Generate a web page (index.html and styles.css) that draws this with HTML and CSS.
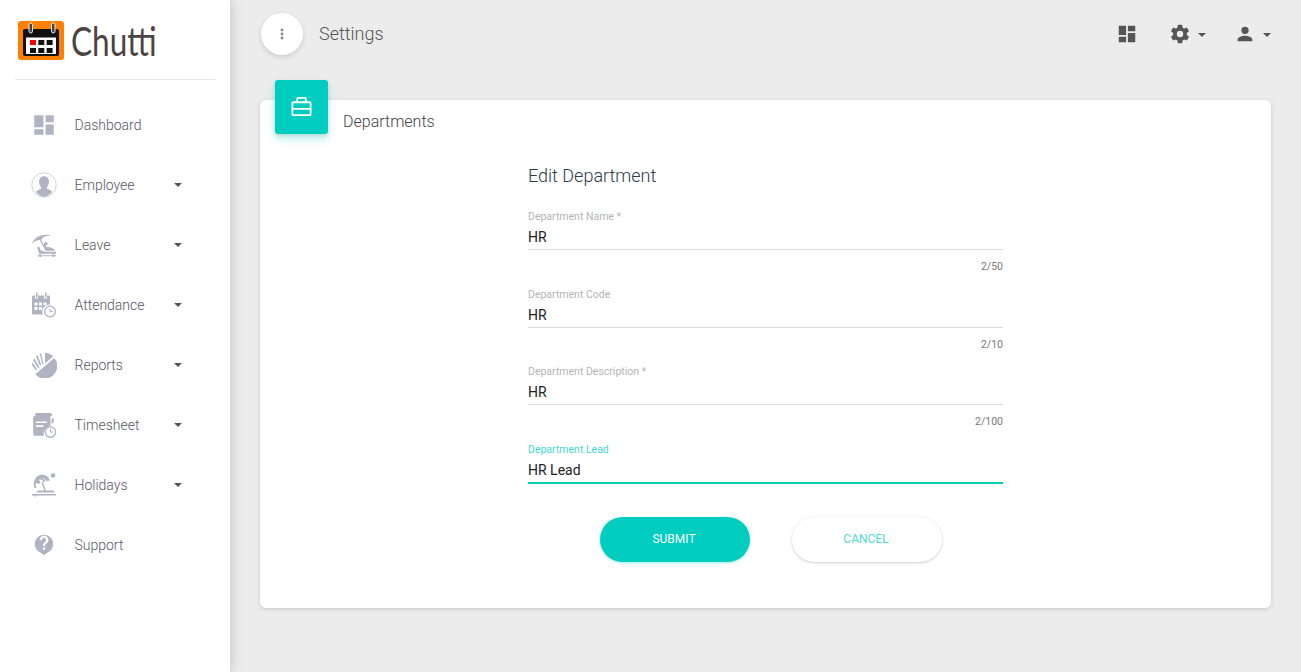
FILE: index.html
```html
<!DOCTYPE html>
<html lang="en">
<head>
  <meta charset="UTF-8"/>
  <title>Chutti - Settings</title>
  <link rel="stylesheet" href="styles.css">
</head>
<body>
  <!-- Sidebar -->
  <aside class="sidebar">
    <div class="brand">
      <svg class="brand-icon" width="47" height="41" viewBox="0 0 47 41">
        <rect width="46" height="39" y="1" rx="3" fill="#ff7f00"/>
        <path d="M7 9h32a2 2 0 0 1 2 2v23a2 2 0 0 1-2 2H7a2 2 0 0 1-2-2V11a2 2 0 0 1 2-2z" fill="#111"/>
        <rect x="8" y="17.500" width="30" height="16.500" fill="#fff"/>
        <rect x="12" y="20" width="6" height="5" fill="#f00"/>
        <rect x="20.300" y="20" width="6" height="5" fill="#111"/>
        <rect x="28.600" y="20" width="6" height="5" fill="#111"/>
        <rect x="12" y="28" width="6" height="5" fill="#111"/>
        <rect x="20.300" y="28" width="6" height="5" fill="#111"/>
        <rect x="28.600" y="28" width="6" height="5" fill="#111"/>
        <rect x="11" y="3" width="3.500" height="10" rx="1.750" fill="#444" stroke="#eee" stroke-width="1"/>
        <rect x="33.500" y="3" width="3.500" height="10" rx="1.750" fill="#444" stroke="#eee" stroke-width="1"/>
      </svg>
      <span class="brand-name">Chutt<span class="brand-i">i</span></span>
    </div>

    <nav class="nav">
      <a class="nav-item">
        <svg class="nav-icon" viewBox="0 0 24 24"><path d="M3 3h8.500v11H3zM13.500 3H21v6.500h-7.500zM13.500 11.500H21V21h-7.500zM3 16h8.500v5H3z"/></svg>
        <span class="nav-label">Dashboard</span>
      </a>
      <a class="nav-item">
        <svg class="nav-icon" viewBox="0 0 24 24"><circle cx="12" cy="12" r="11.300" fill="none" stroke="#c4c6d2" stroke-width=".7"/><path d="M12 4c3 0 4.600 2.300 4.600 5 0 2-.8 3.600-1.800 4.800-.3 1 0 1.700 1 2.200 1.700.7 3 1.300 3.700 2.400A11 11 0 0 1 12 22.800a11 11 0 0 1-7.500-4.400c.7-1.100 2-1.700 3.700-2.400 1-.5 1.300-1.200 1-2.200C8.200 12.600 7.400 11 7.400 9c0-2.700 1.600-5 4.600-5z"/></svg>
        <span class="nav-label">Employee</span>
        <span class="caret"></span>
      </a>
      <a class="nav-item">
        <svg class="nav-icon" viewBox="0 0 28 26"><path d="M1 12C3 5 10 1 18 2c1 0 2 .5 3 1-5-.5-8 1.500-10 4l3 7h-1.300L9.600 7.500C6 7.500 3 9 1 12z"/><path d="M9 15l1.500 4 5 1.200H27V22.500H9L6.500 15.500zM14 11.500a2 2 0 1 1 2.300 2.300l-.6 1.200 5 .5 4 1.800 1.500 2H15.500L13 14z"/><path d="M7 24h20v1H7zM9 23h2v3H9zM23 23h2v3h-2z"/></svg>
        <span class="nav-label">Leave</span>
        <span class="caret"></span>
      </a>
      <a class="nav-item">
        <svg class="nav-icon" viewBox="0 0 26 25"><path d="M2.500 3H4v3h3V3h6v3h3V3h1.500A1.500 1.500 0 0 1 19 4.500V12a7 7 0 0 0-7 10H2.500A1.500 1.500 0 0 1 1 20.500v-16A1.500 1.500 0 0 1 2.500 3zM5 0h1.500v5H5zM14 0h1.500v5H14z"/><path d="M3.500 10h3v3h-3zM8 10h3v3H8zM12.500 10h3v2.500h-3zM3.500 14.500h3v3h-3zM8 14.500h3v3H8z" fill="#fff"/><circle cx="19" cy="19" r="5.300" fill="#fff" stroke="#b0b3c2" stroke-width="1.300"/><path d="M19 16v3h3" fill="none" stroke="#b0b3c2" stroke-width="1"/></svg>
        <span class="nav-label">Attendance</span>
        <span class="caret"></span>
      </a>
      <a class="nav-item">
        <svg class="nav-icon" viewBox="0 0 24 24">
          <path d="M4 20.500L21.500 5.500A11.500 11.500 0 0 1 4 20.500z"/>
          <path d="M13 .6A11.500 11.500 0 0 1 20.500 4L13 10.500z"/>
          <path d="M8 1.700l1.200-.6 2.300 9.700-1 .8zM4.500 4l1.400-1.300 3.500 9-1.200 1zM2 7.500L3 5.800l4.800 8.300-1.200 1zM.7 12l.5-2.500 4.400 6.400-1 1z"/>
        </svg>
        <span class="nav-label">Reports</span>
        <span class="caret"></span>
      </a>
      <a class="nav-item">
        <svg class="nav-icon" viewBox="0 0 24 24"><path d="M4 1h13.500a2 2 0 0 1 2 2v1H4zM2 5.500a2 2 0 0 1 2-2h12a2 2 0 0 1 2 2V13a7 7 0 0 0-6 9H4a2 2 0 0 1-2-2z"/><path d="M19 6h2v3.500l-2 1.500z"/><path d="M4.500 9.500h10M4.500 13h7" stroke="#fff" stroke-width="1.500"/><circle cx="18" cy="18.500" r="4.800" fill="#fff" stroke="#b0b3c2" stroke-width="1.200"/><path d="M18 16v2.500h2.500" fill="none" stroke="#b0b3c2"/></svg>
        <span class="nav-label">Timesheet</span>
        <span class="caret"></span>
      </a>
      <a class="nav-item">
        <svg class="nav-icon" viewBox="0 0 26 24"><circle cx="22" cy="2.500" r="2.300"/><path d="M3.500 15C1.500 9 4 3.500 9 2c4-1.200 8.500 1 10 5.500l-3.500.6C14 5.500 11.500 5 11 5c2 1 3 2 3.500 3.500l-2.300.8-.9-2.300C10 6 8 6.500 7.500 7c1 .5 1.700 1.500 2 2.500L7.500 11c-1-.5-2-1-2.700-1-.2 1 0 4 .7 5z"/><path d="M12 9l3 9h-1.500L10.500 9.500zM7 17.500h15l2 2H5zM1 21h24v1.500H1zM3.500 22H5v1.500H3.500z"/></svg>
        <span class="nav-label">Holidays</span>
        <span class="caret"></span>
      </a>
      <a class="nav-item">
        <svg class="nav-icon" viewBox="-2 -1 28 28"><path d="M12 2a10 10 0 0 0-3 19.500L12 24l3-2.500A10 10 0 0 0 12 2zm1.200 16h-2.400v-2.400h2.400zm2.500-7.700l-1.100 1.100c-.9.900-1.400 1.600-1.400 2.800h-2.400v-.6c0-1.100.5-2 1.400-2.900l1.500-1.500c.4-.4.600-.9.600-1.400a2.400 2.400 0 0 0-4.800 0H7.200a4.800 4.800 0 0 1 9.600 0c0 1-.4 1.900-1.100 2.500z" fill-rule="evenodd"/></svg>
        <span class="nav-label">Support</span>
      </a>
    </nav>
  </aside>

  <!-- Main panel -->
  <main class="main">
    <header class="topbar">
      <button class="menu-btn">
        <svg width="4" height="12" viewBox="0 0 4 12"><circle cx="2" cy="2" r="1.400"/><circle cx="2" cy="6" r="1.400"/><circle cx="2" cy="10" r="1.400"/></svg>
      </button>
      <span class="page-title">Settings</span>
      <div class="top-actions">
        <svg class="top-icon" viewBox="0 0 24 24"><path d="M3 13h8V3H3zm0 8h8v-6H3zm10 0h8V11h-8zm0-18v6h8V3z"/></svg>
        <span class="top-group">
          <svg class="top-icon" viewBox="0 0 24 24"><path d="M19.430 12.980c.04-.32.070-.64.070-.98s-.03-.66-.07-.98l2.110-1.650a.5.500 0 0 0 .12-.64l-2-3.460a.5.500 0 0 0-.61-.22l-2.490 1a7.300 7.300 0 0 0-1.690-.98l-.38-2.650A.49.490 0 0 0 14 2h-4a.49.490 0 0 0-.49.420l-.38 2.650c-.61.250-1.170.590-1.690.98l-2.490-1a.49.490 0 0 0-.61.220l-2 3.460a.49.490 0 0 0 .12.640l2.110 1.650c-.04.320-.07.650-.07.980s.03.660.07.980l-2.110 1.650a.5.500 0 0 0-.12.640l2 3.460c.12.220.39.300.61.220l2.490-1c.52.400 1.080.730 1.690.98l.38 2.650c.03.240.24.420.49.420h4c.25 0 .46-.18.490-.42l.38-2.650c.61-.25 1.170-.59 1.690-.98l2.490 1c.23.090.49 0 .61-.22l2-3.460a.5.500 0 0 0-.12-.64zM12 15.500a3.500 3.500 0 1 1 0-7 3.500 3.500 0 0 1 0 7z"/></svg>
          <span class="caret"></span>
        </span>
        <span class="top-group">
          <svg class="top-icon" viewBox="0 0 24 24"><path d="M12 12a4 4 0 1 0 0-8 4 4 0 0 0 0 8zm0 2c-2.670 0-8 1.340-8 4v2h16v-2c0-2.660-5.330-4-8-4z"/></svg>
          <span class="caret"></span>
        </span>
      </div>
    </header>

    <section class="card">
      <div class="card-tab">
        <svg width="23" height="23" viewBox="0 0 24 24" fill="none" stroke="#fff" stroke-width="1.900"><path d="M3.500 6.500h17a1 1 0 0 1 1 1V19a1 1 0 0 1-1 1h-17a1 1 0 0 1-1-1V7.500a1 1 0 0 1 1-1zM7.500 6.500V3a1 1 0 0 1 1-1h7a1 1 0 0 1 1 1v3.500M2.500 13.500h19"/></svg>
      </div>
      <h4 class="card-title">Departments</h4>

      <form class="dept-form">
        <h3 class="form-title">Edit Department</h3>

        <div class="field">
          <label class="field-label">Department Name *</label>
          <input class="field-input" value="HR"/>
          <div class="field-count">2/50</div>
        </div>
        <div class="field">
          <label class="field-label">Department Code</label>
          <input class="field-input" value="HR"/>
          <div class="field-count">2/10</div>
        </div>
        <div class="field">
          <label class="field-label">Department Description *</label>
          <input class="field-input" value="HR"/>
          <div class="field-count">2/100</div>
        </div>
        <div class="field field-active">
          <label class="field-label">Department Lead</label>
          <input class="field-input" value="HR Lead"/>
        </div>

        <div class="form-actions">
          <button type="button" class="btn btn-submit">Submit</button>
          <button type="button" class="btn btn-cancel">Cancel</button>
        </div>
      </form>
    </section>
  </main>
</body>
</html>
```

FILE: styles.css
```css
/* Reset */
* { box-sizing: border-box; margin: 0; padding: 0; }
html, body { height: 100%; }
body {
  display: flex;
  height: 672px;
  overflow: hidden;
  background: #ececec;
  font-family: Roboto, "Liberation Sans", sans-serif;
  font-weight: 300;
}

/* Sidebar */
.sidebar {
  flex: 0 0 230px;
  background: #fff;
  box-shadow: 0 0 12px rgba(0, 0, 0, .2);
  z-index: 2;
}
.brand {
  display: flex; align-items: center;
  height: 80px; margin: 0 15px;
  padding: 1px 0 0 3px;
  border-bottom: 1px solid #e6e6e6;
}
.brand-icon { flex: none; }
.brand-name {
  display: inline-block;
  margin-left: 6px;
  font-family: Lato, sans-serif;
  font-size: 41px; font-weight: 400;
  color: #4b4442;
  transform: scaleX(.77);
  transform-origin: left center;
}
.brand-i { color: #ff7f00; }

.nav { padding-top: 15px; }
.nav-item {
  display: flex; align-items: center;
  height: 60px; padding-left: 31px;
  color: #555766; font-size: 14px; font-weight: 300;
}
.nav-icon {
  flex: none;
  width: 26px; height: 26px;
  margin-right: 17.500px;
  fill: #b0b3c2;
}
.nav-label { flex: 1; }
.caret {
  width: 0; height: 0;
  margin-right: 48px;
  border-top: 4px solid #555;
  border-left: 4px solid transparent;
  border-right: 4px solid transparent;
}

/* Main panel */
.main { flex: 1; min-width: 0; padding: 13px 30px 0 30px; }
.topbar { display: flex; align-items: center; height: 42px; margin-left: 1px; }
.menu-btn {
  flex: none;
  display: flex; align-items: center; justify-content: center;
  width: 42px; height: 42px;
  border: none; border-radius: 50%;
  background: #fff; fill: #8a8a8a;
  box-shadow: 0 2px 5px rgba(0, 0, 0, .14);
}
.page-title {
  margin: -2px 0 0 16px;
  font-size: 18px; color: #555;
}
.top-actions {
  display: flex; align-items: center;
  margin-left: auto;
  fill: #555;
}
.top-icon { width: 22px; height: 22px; }
.top-group { display: flex; align-items: center; margin-left: 31px; }
.top-group .caret { margin: 2px 0 0 7px; }
.top-group + .top-group { margin-left: 28px; }

/* Card */
.card {
  position: relative;
  height: 508px; margin-top: 45px;
  background: #fff; border-radius: 6px;
  box-shadow: 0 1px 4px rgba(0, 0, 0, .16);
}
.card-tab {
  position: absolute; left: 15px; top: -20px;
  display: flex; align-items: center; justify-content: center;
  width: 53px; height: 54px;
  background: #00cdc0; border-radius: 3px;
  box-shadow: 0 5px 10px rgba(0, 206, 192, .25), 0 2px 4px rgba(0, 0, 0, .12);
}
.card-title {
  padding: 12px 0 0 83px;
  font-size: 16px; font-weight: 300;
  line-height: 20px; color: #444;
}

/* Form */
.dept-form { width: 475px; margin: 32px 0 0 268px; }
.form-title {
  margin-bottom: 22px;
  font-size: 18px; font-weight: 300;
  line-height: 24px; color: #2d3a4a;
}
.field { height: 77.670px; }
.field-label {
  display: block;
  font-size: 10.500px; line-height: 14px;
  font-weight: 400; color: #b4b4b4;
}
.field-input {
  display: block; width: 100%; height: 26px;
  padding-top: 1px;
  border: none; border-bottom: 1px solid #dcdcdc;
  outline: none; background: none;
  font: 400 14px Roboto, sans-serif;
  color: #222;
}
.field-count {
  margin-top: 10px;
  font-size: 10.500px; font-weight: 400;
  line-height: 14px; text-align: right;
  color: #777;
}
.field-active .field-label { color: #3fd9cf; }
.field-active .field-input { height: 27px; border-bottom: 2px solid #00cdc0; }

.form-actions {
  display: flex; gap: 42px;
  margin: -4px 0 0 72px;
}
.btn {
  width: 150px; height: 45px;
  border: none; border-radius: 23px;
  padding-right: 2px;
  font: 400 12px Roboto, sans-serif;
  text-transform: uppercase;
}
.btn-submit {
  background: #00cdc0; color: #fff;
  box-shadow: 0 1px 3px rgba(0, 206, 192, .4);
}
.btn-cancel {
  background: #fff; color: #4fdad1;
  box-shadow: 0 1px 3px rgba(0, 0, 0, .2);
}
```
